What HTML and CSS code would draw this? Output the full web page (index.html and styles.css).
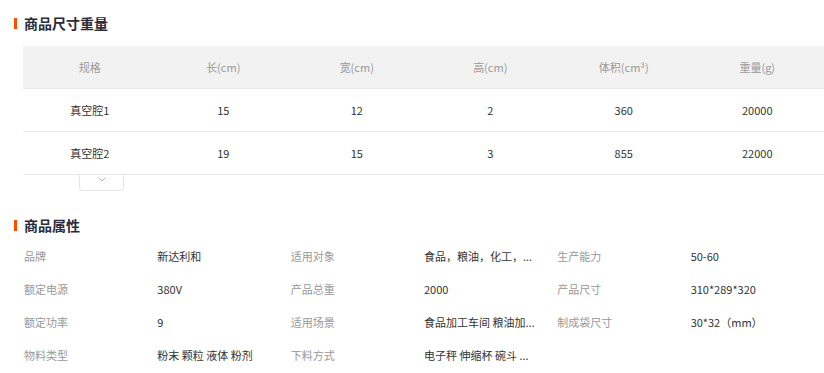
FILE: index.html
```html
<!DOCTYPE html>
<html lang="zh">
<head>
<meta charset="utf-8">
<title>商品尺寸重量</title>
<link rel="stylesheet" href="styles.css">
</head>
<body>
<div class="page">
  <h2 class="sec-title">商品尺寸重量</h2>
  <div class="size-table">
    <div class="tr th">
      <div class="td">规格</div>
      <div class="td">长(cm)</div>
      <div class="td">宽(cm)</div>
      <div class="td">高(cm)</div>
      <div class="td">体积(cm³)</div>
      <div class="td">重量(g)</div>
    </div>
    <div class="tr">
      <div class="td">真空腔1</div>
      <div class="td">15</div>
      <div class="td">12</div>
      <div class="td">2</div>
      <div class="td">360</div>
      <div class="td">20000</div>
    </div>
    <div class="tr">
      <div class="td">真空腔2</div>
      <div class="td">19</div>
      <div class="td">15</div>
      <div class="td">3</div>
      <div class="td">855</div>
      <div class="td">22000</div>
    </div>
  </div>
  <div class="toggle">
    <svg width="8" height="5" viewBox="0 0 8 5"><path d="M0.5 0.5 L4 4 L7.5 0.5" fill="none" stroke="#aab0bb" stroke-width="1"/></svg>
  </div>

  <h2 class="sec-title sec-title-2">商品属性</h2>
  <div class="attrs">
    <div class="k">品牌</div><div class="v">新达利和</div>
    <div class="k">适用对象</div><div class="v">食品，粮油，化工，...</div>
    <div class="k">生产能力</div><div class="v">50-60</div>

    <div class="k">额定电源</div><div class="v">380V</div>
    <div class="k">产品总重</div><div class="v">2000</div>
    <div class="k">产品尺寸</div><div class="v">310*289*320</div>

    <div class="k">额定功率</div><div class="v">9</div>
    <div class="k">适用场景</div><div class="v">食品加工车间 粮油加...</div>
    <div class="k">制成袋尺寸</div><div class="v">30*32（mm）</div>

    <div class="k">物料类型</div><div class="v">粉末 颗粒 液体 粉剂</div>
    <div class="k">下料方式</div><div class="v">电子秤 伸缩杯 碗斗 ...</div>
  </div>
</div>
</body>
</html>
```

FILE: styles.css
```css
html, body {
  margin: 0;
  padding: 0;
  background: #fff;
}
body {
  font-family: "Noto Sans CJK SC", "Noto Sans", sans-serif;
  font-size: 11px;
  color: #333;
}
.page {
  width: 824px;
  padding-top: 12px;
}
.sec-title {
  margin: 6px 0 0 14px;
  padding-left: 7px;
  border-left: 3px solid #ff4d00;
  height: 11px;
  line-height: 11px;
  font-size: 14px;
  font-weight: bold;
  color: #2b2b3a;
  display: flex;
  align-items: center;
}
.size-table {
  margin: 17px 0 0 23px;
  width: 801px;
}
.tr {
  display: grid;
  grid-template-columns: repeat(6, 1fr);
  height: 42px;
  border-bottom: 1px solid #e8e8e8;
  align-items: center;
  text-align: center;
  color: #333;
}
.th {
  background: #f2f2f2;
  color: #999;
}
.toggle {
  margin-left: 79px;
  width: 45px;
  height: 16px;
  border: 1px solid #e6e6e6;
  border-top: none;
  border-radius: 0 0 4px 4px;
  display: flex;
  justify-content: center;
  align-items: flex-start;
  padding-top: 2px;
  box-sizing: border-box;
}
.toggle svg {
  display: block;
}
.sec-title-2 {
  margin-top: 29px;
}
.attrs {
  margin: 9px 0 0 24px;
  width: 800px;
  display: grid;
  grid-template-columns: repeat(6, 1fr);
  grid-auto-rows: 32.8px;
  align-items: center;
}
.k {
  color: #999;
}
.v {
  color: #333;
  white-space: nowrap;
}
```
